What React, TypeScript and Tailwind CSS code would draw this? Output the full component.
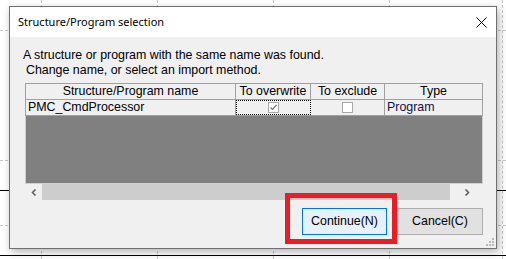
import { useState } from 'react'

const font = { fontFamily: '"Liberation Sans", Arial, sans-serif' }

// background sheet lines behind the dialog
function Backdrop() {
  return (
    <>
      {[41, 157, 273, 389].map((x) => (
        <div key={x} className="absolute top-0 h-full border-l border-dashed border-[#c8c8c8]" style={{ left: x }} />
      ))}
      <div className="absolute left-[502px] top-0 h-full border-l border-dashed border-[#c8c8c8]" />
      {[30, 160, 225].map((y) => (
        <div key={y} className="absolute left-0 w-full border-t border-dashed border-[#c8c8c8]" style={{ top: y }} />
      ))}
      <div className="absolute left-0 top-[190px] w-full border-t border-black" />
      <div className="absolute left-0 top-[255px] w-full border-t border-black" />
    </>
  )
}

function Check({ checked }: { checked?: boolean }) {
  return (
    <span className="flex h-[11px] w-[11px] items-center justify-center border border-[#a8a8a8] bg-white">
      {checked && (
        <svg width="9" height="9" viewBox="0 0 9 9">
          <path d="M1.5 4.5 L3.5 6.5 L7.5 2" fill="none" stroke="#777" strokeWidth="1.2" />
        </svg>
      )}
    </span>
  )
}

export default function App() {
  const [overwrite] = useState(true)

  return (
    <div className="relative h-[259px] w-[506px] overflow-hidden bg-white" style={font}>
      <Backdrop />

      <div className="absolute left-[9px] top-[6px] flex h-[243px] w-[488px] flex-col border border-[#707070] bg-[#f0f0f0] shadow-[2px_3px_8px_rgba(0,0,0,0.3)]">
        {/* title bar */}
        <div className="flex h-[30px] shrink-0 items-center justify-between bg-white pl-[8px] pr-[9px]">
          <span className="pt-[1px] text-[11px] text-black" style={{ fontFamily: '"Noto Sans", "Open Sans", sans-serif' }}>
            Structure/Program selection
          </span>
          <svg width="11" height="11" viewBox="0 0 11 11">
            <path d="M0.5 0.5 L10.5 10.5 M10.5 0.5 L0.5 10.5" stroke="#000" strokeWidth="1" />
          </svg>
        </div>

        <div className="relative flex flex-1 flex-col pl-[15px] pr-[14px] pt-[11px]">
          <div className="-ml-[2px] text-[12.4px] leading-[15px] text-black">
            <div>A structure or program with the same name was found.</div>
            <div className="pl-[3px]">Change name, or select an import method.</div>
          </div>

          {/* grid */}
          <div className="mt-[5px] w-[458px] text-[12.4px] leading-[15px] text-black">
            <div className="flex h-[17px] border border-[#a0a0a0] bg-[#f0f0f0]">
              <div className="w-[210px] border-r border-[#a0a0a0] text-center">Structure/Program name</div>
              <div className="w-[75px] border-r border-[#a0a0a0] text-center">To overwrite</div>
              <div className="w-[74px] border-r border-[#a0a0a0] text-center">To exclude</div>
              <div className="flex-1 text-center">Type</div>
            </div>
            <div className="flex h-[16px] border-x border-b border-[#a0a0a0] bg-[#f0f0f0]">
              <div className="w-[210px] border-r border-[#a0a0a0] pl-[2px]">PMC_CmdProcessor</div>
              <div className="flex w-[75px] items-center justify-center border border-dotted border-black">
                <Check checked={overwrite} />
              </div>
              <div className="flex w-[74px] items-center justify-center border-r border-[#a0a0a0]">
                <Check />
              </div>
              <div className="flex-1 pl-[2px] text-[#14104a]">Program</div>
            </div>
            <div className="h-[68px] border-x border-b border-[#d0d0d0] bg-[#808080]" />

            {/* horizontal scrollbar */}
            <div className="flex h-[16px] items-center">
              <div className="flex w-[17px] justify-center">
                <svg width="6" height="7" viewBox="0 0 6 7">
                  <path d="M4.5 0.5 L1.5 3.5 L4.5 6.5" fill="none" stroke="#606060" strokeWidth="1.6" />
                </svg>
              </div>
              <div className="h-full w-[408px] bg-[#cdcdcd]" />
              <div className="flex flex-1 justify-center">
                <svg width="6" height="7" viewBox="0 0 6 7">
                  <path d="M1.5 0.5 L4.5 3.5 L1.5 6.5" fill="none" stroke="#606060" strokeWidth="1.6" />
                </svg>
              </div>
            </div>
          </div>

          {/* buttons */}
          <div className="mt-[8px] flex w-[458px] justify-end gap-[10px]">
            <button className="h-[27px] w-[85px] border border-[#0078d7] bg-[#e5f1fb] text-[12.4px] text-black">
              Continue(N)
            </button>
            <button className="h-[27px] w-[86px] border border-[#adadad] bg-[#e1e1e1] text-[12.4px] text-black">
              Cancel(C)
            </button>
          </div>

          {/* resize grip */}
          <svg className="absolute bottom-[2px] right-[2px]" width="8" height="8" viewBox="0 0 8 8">
            {[
              [6, 0], [6, 3], [3, 3], [6, 6], [3, 6], [0, 6],
            ].map(([x, y]) => (
              <rect key={`${x}-${y}`} x={x} y={y} width="2" height="2" fill="#b8b8b8" />
            ))}
          </svg>
        </div>
      </div>

      {/* red highlight annotation */}
      <div className="absolute left-[285px] top-[193px] h-[51px] w-[112px] border-[5px] border-[#ed1c24]" />
    </div>
  )
}
